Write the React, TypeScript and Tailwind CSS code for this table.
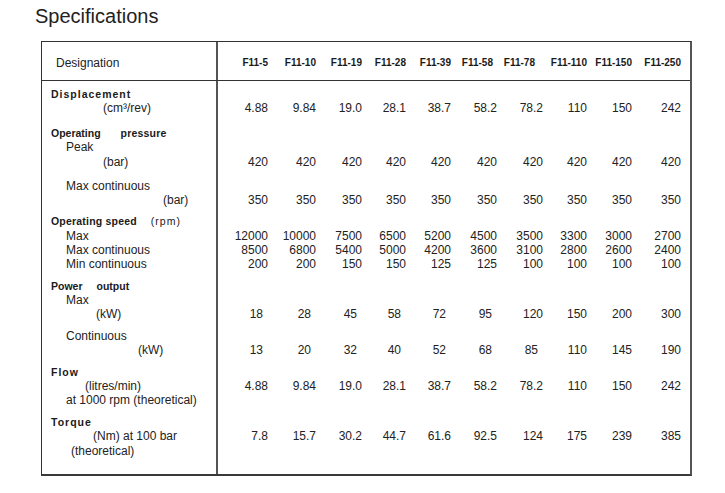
import type { ReactNode } from "react";

const models = ["F11-5", "F11-10", "F11-19", "F11-28", "F11-39", "F11-58", "F11-78", "F11-110", "F11-150", "F11-250"];

// widths picked so the right edges line up with the scan's columns
const cols = "grid grid-cols-[50px_48px_46px_44px_45px_46px_46px_44px_45px_49px]";

type Line = {
  pad?: string;
  indent?: string;
  label: ReactNode;
  vals?: string[];
};

function Head({ children, className = "" }: { children: ReactNode; className?: string }) {
  return <span className={`font-bold text-[10.5px] text-[#1a1a1a] ${className}`}>{children}</span>;
}

const lines: Line[] = [
  { pad: "pt-[6px]", indent: "pl-[9px]", label: <Head className="tracking-[1px]">Displacement</Head> },
  { indent: "pl-[61px]", label: "(cm³/rev)", vals: ["4.88", "9.84", "19.0", "28.1", "38.7", "58.2", "78.2", "110", "150", "242"] },
  {
    pad: "pt-[11px]",
    indent: "pl-[9px]",
    label: (
      <>
        <Head>Operating</Head>
        <Head className="ml-[20px] tracking-[0.2px]">pressure</Head>
      </>
    ),
  },
  { indent: "pl-[24px]", label: "Peak" },
  { pad: "pt-[1px]", indent: "pl-[61px]", label: "(bar)", vals: Array(10).fill("420") },
  { pad: "pt-[10px]", indent: "pl-[24px]", label: "Max continuous" },
  { indent: "pl-[121px]", label: "(bar)", vals: Array(10).fill("350") },
  {
    pad: "pt-[7px]",
    indent: "pl-[9px]",
    label: (
      <>
        <Head className="tracking-[0.2px]">Operating speed</Head>
        <Head className="ml-[14px] tracking-[1px] font-normal">(rpm)</Head>
      </>
    ),
  },
  { pad: "pt-[1px]", indent: "pl-[24px]", label: "Max", vals: ["12000", "10000", "7500", "6500", "5200", "4500", "3500", "3300", "3000", "2700"] },
  { indent: "pl-[24px]", label: "Max continuous", vals: ["8500", "6800", "5400", "5000", "4200", "3600", "3100", "2800", "2600", "2400"] },
  { indent: "pl-[24px]", label: "Min continuous", vals: ["200", "200", "150", "150", "125", "125", "100", "100", "100", "100"] },
  {
    pad: "pt-[8px]",
    indent: "pl-[9px]",
    label: (
      <>
        <Head>Power</Head>
        <Head className="ml-[14px]">output</Head>
      </>
    ),
  },
  { indent: "pl-[24px]", label: "Max" },
  { indent: "pl-[54px]", label: "(kW)", vals: ["18", "28", "45", "58", "72", "95", "120", "150", "200", "300"] },
  { pad: "pt-[8px]", indent: "pl-[24px]", label: "Continuous" },
  { indent: "pl-[96px]", label: "(kW)", vals: ["13", "20", "32", "40", "52", "68", "85", "110", "145", "190"] },
  { pad: "pt-[8px]", indent: "pl-[9px]", label: <Head className="tracking-[1px]">Flow</Head> },
  { indent: "pl-[43px]", label: "(litres/min)", vals: ["4.88", "9.84", "19.0", "28.1", "38.7", "58.2", "78.2", "110", "150", "242"] },
  { indent: "pl-[24px]", label: "at 1000 rpm (theoretical)" },
  { pad: "pt-[8px]", indent: "pl-[9px]", label: <Head className="tracking-[1px]">Torque</Head> },
  { indent: "pl-[51px]", label: "(Nm) at 100 bar", vals: ["7.8", "15.7", "30.2", "44.7", "61.6", "92.5", "124", "175", "239", "385"] },
  { pad: "pt-[1px]", indent: "pl-[29px]", label: "(theoretical)" },
];

function Row({ line }: { line: Line }) {
  return (
    <div className="flex">
      <div className={`w-[176px] shrink-0 border-r-2 border-[#555] whitespace-nowrap ${line.pad ?? ""} ${line.indent ?? ""}`}>
        <div className="h-[14px] leading-[14px]">{line.label}</div>
      </div>
      <div className={line.pad ?? ""}>
        <div className={`${cols} h-[14px] leading-[14px]`}>
          {line.vals?.map((v, i) => (
            <div key={i} className={`text-right whitespace-nowrap ${v.length === 2 ? "pr-[5px]" : ""}`}>
              {v}
            </div>
          ))}
        </div>
      </div>
    </div>
  );
}

export default function App() {
  return (
    <div className="w-[725px] h-[493px] bg-white text-[#222] font-['Liberation_Sans',Arial,sans-serif] text-[12px]">
      <h1 className="pl-[35px] pt-[6px] text-[20px] leading-[20px] text-[#222]">Specifications</h1>

      <div className="ml-[41px] mt-[15px] w-[651px] border-l border-t border-[#333] border-r-2 border-r-[#555] border-b-2 border-b-[#3a3a3a]">
        {/* header */}
        <div className="flex h-[39px] border-b border-[#333]">
          <div className="w-[176px] shrink-0 border-r-2 border-[#555] pl-[14px] pt-[14px] leading-[14px]">Designation</div>
          <div className={`${cols} pt-[15px] leading-[12px]`}>
            {models.map((m, i) => (
              <div
                key={m}
                className={`text-right whitespace-nowrap font-bold text-[10px] text-[#1a1a1a] ${i === 5 ? "pr-[4px]" : ""} ${i === 6 ? "pr-[8px]" : ""}`}
              >
                {m}
              </div>
            ))}
          </div>
        </div>

        {/* body */}
        {lines.map((l, i) => (
          <Row key={i} line={l} />
        ))}
        <div className="flex">
          <div className="w-[176px] h-[16px] border-r-2 border-[#555]" />
        </div>
      </div>
    </div>
  );
}
